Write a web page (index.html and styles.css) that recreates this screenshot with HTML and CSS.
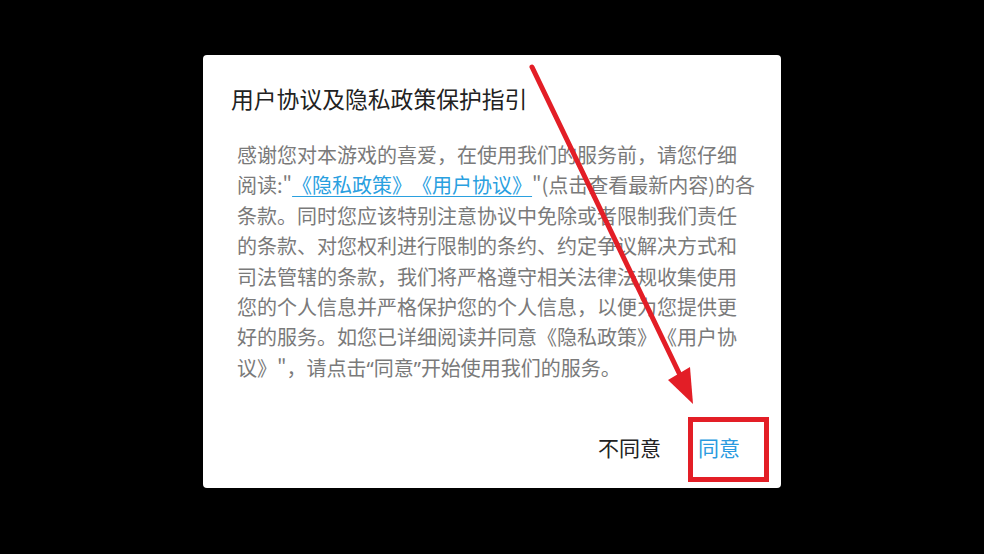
FILE: index.html
```html
<!DOCTYPE html>
<html lang="zh-CN">
<head>
<meta charset="utf-8">
<title>用户协议及隐私政策保护指引</title>
<link rel="stylesheet" href="styles.css">
</head>
<body>
<div class="screen">
  <div class="dialog">
    <h1 class="title">用户协议及隐私政策保护指引</h1>
    <p class="content">感谢您对本游戏的喜爱，在使用我们的服务前，请您仔细<br>阅读:"<a class="link" href="#">《隐私政策》《用户协议》</a>"(点击查看最新内容)的各<br>条款。同时您应该特别注意协议中免除或者限制我们责任<br>的条款、对您权利进行限制的条约、约定争议解决方式和<br>司法管辖的条款，我们将严格遵守相关法律法规收集使用<br>您的个人信息并严格保护您的个人信息，以便为您提供更<br>好的服务。如您已详细阅读并同意《隐私政策》《用户协<br>议》"，请点击<span class="q">“</span>同意<span class="q">”</span>开始使用我们的服务。</p>
    <div class="actions">
      <button class="btn btn-deny">不同意</button>
      <button class="btn btn-agree">同意</button>
    </div>
  </div>
  <div class="highlight"></div>
  <svg class="arrow" width="984" height="554" viewBox="0 0 984 554">
    <line x1="532" y1="67" x2="680" y2="375" stroke="#e31e26" stroke-width="5" stroke-linecap="round"/>
    <polygon points="693,404 668,380 690,367" fill="#e31e26"/>
  </svg>
</div>
</body>
</html>
```

FILE: styles.css
```css
html, body {
  margin: 0;
  padding: 0;
  background: #000;
}

.screen {
  position: relative;
  width: 984px;
  height: 554px;
  overflow: hidden;
  background: #000;
  font-family: "Noto Sans CJK SC", "Noto Sans", sans-serif;
  text-spacing-trim: space-all;
}

.dialog {
  width: 578px;
  height: 433px;
  margin: 55px auto 0;
  background: #fff;
  border-radius: 4px;
  box-sizing: border-box;
  padding: 29px 41px 0 28px;
  display: flex;
  flex-direction: column;
}

.title {
  margin: 0;
  font-size: 22.8px;
  line-height: 30px;
  font-weight: 400;
  color: #222;
}

.content {
  margin: 26px 0 0 6px;
  font-size: 20px;
  line-height: 30.4px;
  color: #7a7a7a;
  white-space: nowrap;
}

.q {
  font-family: "Noto Sans", sans-serif;
}

.link {
  color: #2aa0df;
  text-decoration: underline;
  text-decoration-thickness: 1px;
  text-underline-offset: 3px;
}

.actions {
  margin-top: 48px;
  display: flex;
  justify-content: flex-end;
  gap: 37px;
}

.btn {
  border: 0;
  background: none;
  padding: 0;
  font-family: inherit;
  font-size: 21px;
  line-height: 30px;
}

.btn-deny {
  color: #222;
}

.btn-agree {
  color: #2b9be0;
}

.highlight {
  position: absolute;
  left: 688px;
  top: 417px;
  width: 81px;
  height: 65px;
  box-sizing: border-box;
  border: 5px solid #e31e26;
}

.arrow {
  position: absolute;
  left: 0;
  top: 0;
}
```
